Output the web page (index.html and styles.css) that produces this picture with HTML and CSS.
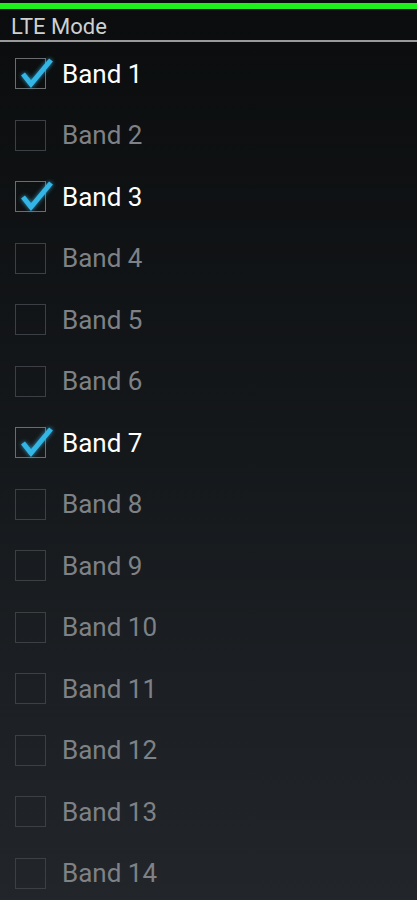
FILE: index.html
```html
<!DOCTYPE html>
<html>
<head>
    <title>LTE Mode</title>
    <link rel="stylesheet" href="styles.css">
</head>
<body>
    <div class="status-strip"></div>
    <div class="screen">
        <div class="section-title">LTE Mode</div>
        <ul class="band-list" id="band-list"></ul>
    </div>

    <script>
        // Bands offered by the radio, with the ones currently enabled
        const bands = [1, 2, 3, 4, 5, 6, 7, 8, 9, 10, 11, 12, 13, 14];
        const enabled = [1, 3, 7];

        const checkSvg = '<svg class="tick" viewBox="0 0 44 40" width="44" height="40">' +
            '<path d="M9 17 L17 27 L37 3" fill="none" stroke="#33b5e5" stroke-width="5" stroke-linecap="butt" stroke-linejoin="miter"/>' +
            '</svg>';

        function renderBands() {
            const list = document.getElementById('band-list');
            list.innerHTML = '';
            bands.forEach(function(n) {
                const on = enabled.indexOf(n) !== -1;
                const li = document.createElement('li');
                li.className = 'band-row' + (on ? ' checked' : '');
                li.innerHTML = '<span class="box">' + (on ? checkSvg : '') + '</span>' +
                    '<span class="band-label">Band ' + n + '</span>';
                li.onclick = function() {
                    const i = enabled.indexOf(n);
                    if (i === -1) enabled.push(n); else enabled.splice(i, 1);
                    renderBands();
                };
                list.appendChild(li);
            });
        }

        window.onload = renderBands;
    </script>
</body>
</html>
```
FILE: styles.css
```css
html, body { margin: 0; padding: 0; }
body {
    font-family: Roboto, "Noto Sans", Arial, sans-serif;
    background: linear-gradient(to bottom, #0a0c0d 0%, #15181b 50%, #22262b 100%);
    min-height: 900px;
    overflow: hidden;
}
.status-strip { height: 6px; margin-top: 3px; background: #1ef01e; }
.screen { width: 100%; }
.section-title {
    font-size: 22px;
    line-height: 26px;
    color: #cfd0d0;
    padding: 5px 0 0 11px;
    height: 26px;
    border-bottom: 2px solid #9a9a9a;
}
.band-list { list-style: none; margin: 0; padding: 1px 0 0 0; }
.band-row {
    height: 61.5px;
    display: flex;
    align-items: center;
    padding-left: 15px;
    cursor: pointer;
}
.box {
    position: relative;
    width: 29px;
    height: 29px;
    border: 1px solid #3c4044;
    flex: none;
}
.checked .box { border-color: #6a6d70; }
.tick {
    position: absolute;
    left: -2px;
    top: -2px;
    filter: drop-shadow(0 0 2px rgba(51, 181, 229, 0.8));
}
.band-label {
    margin-left: 16px;
    font-size: 26px;
    color: #7e8185;
}
.checked .band-label { color: #ffffff; }
```
